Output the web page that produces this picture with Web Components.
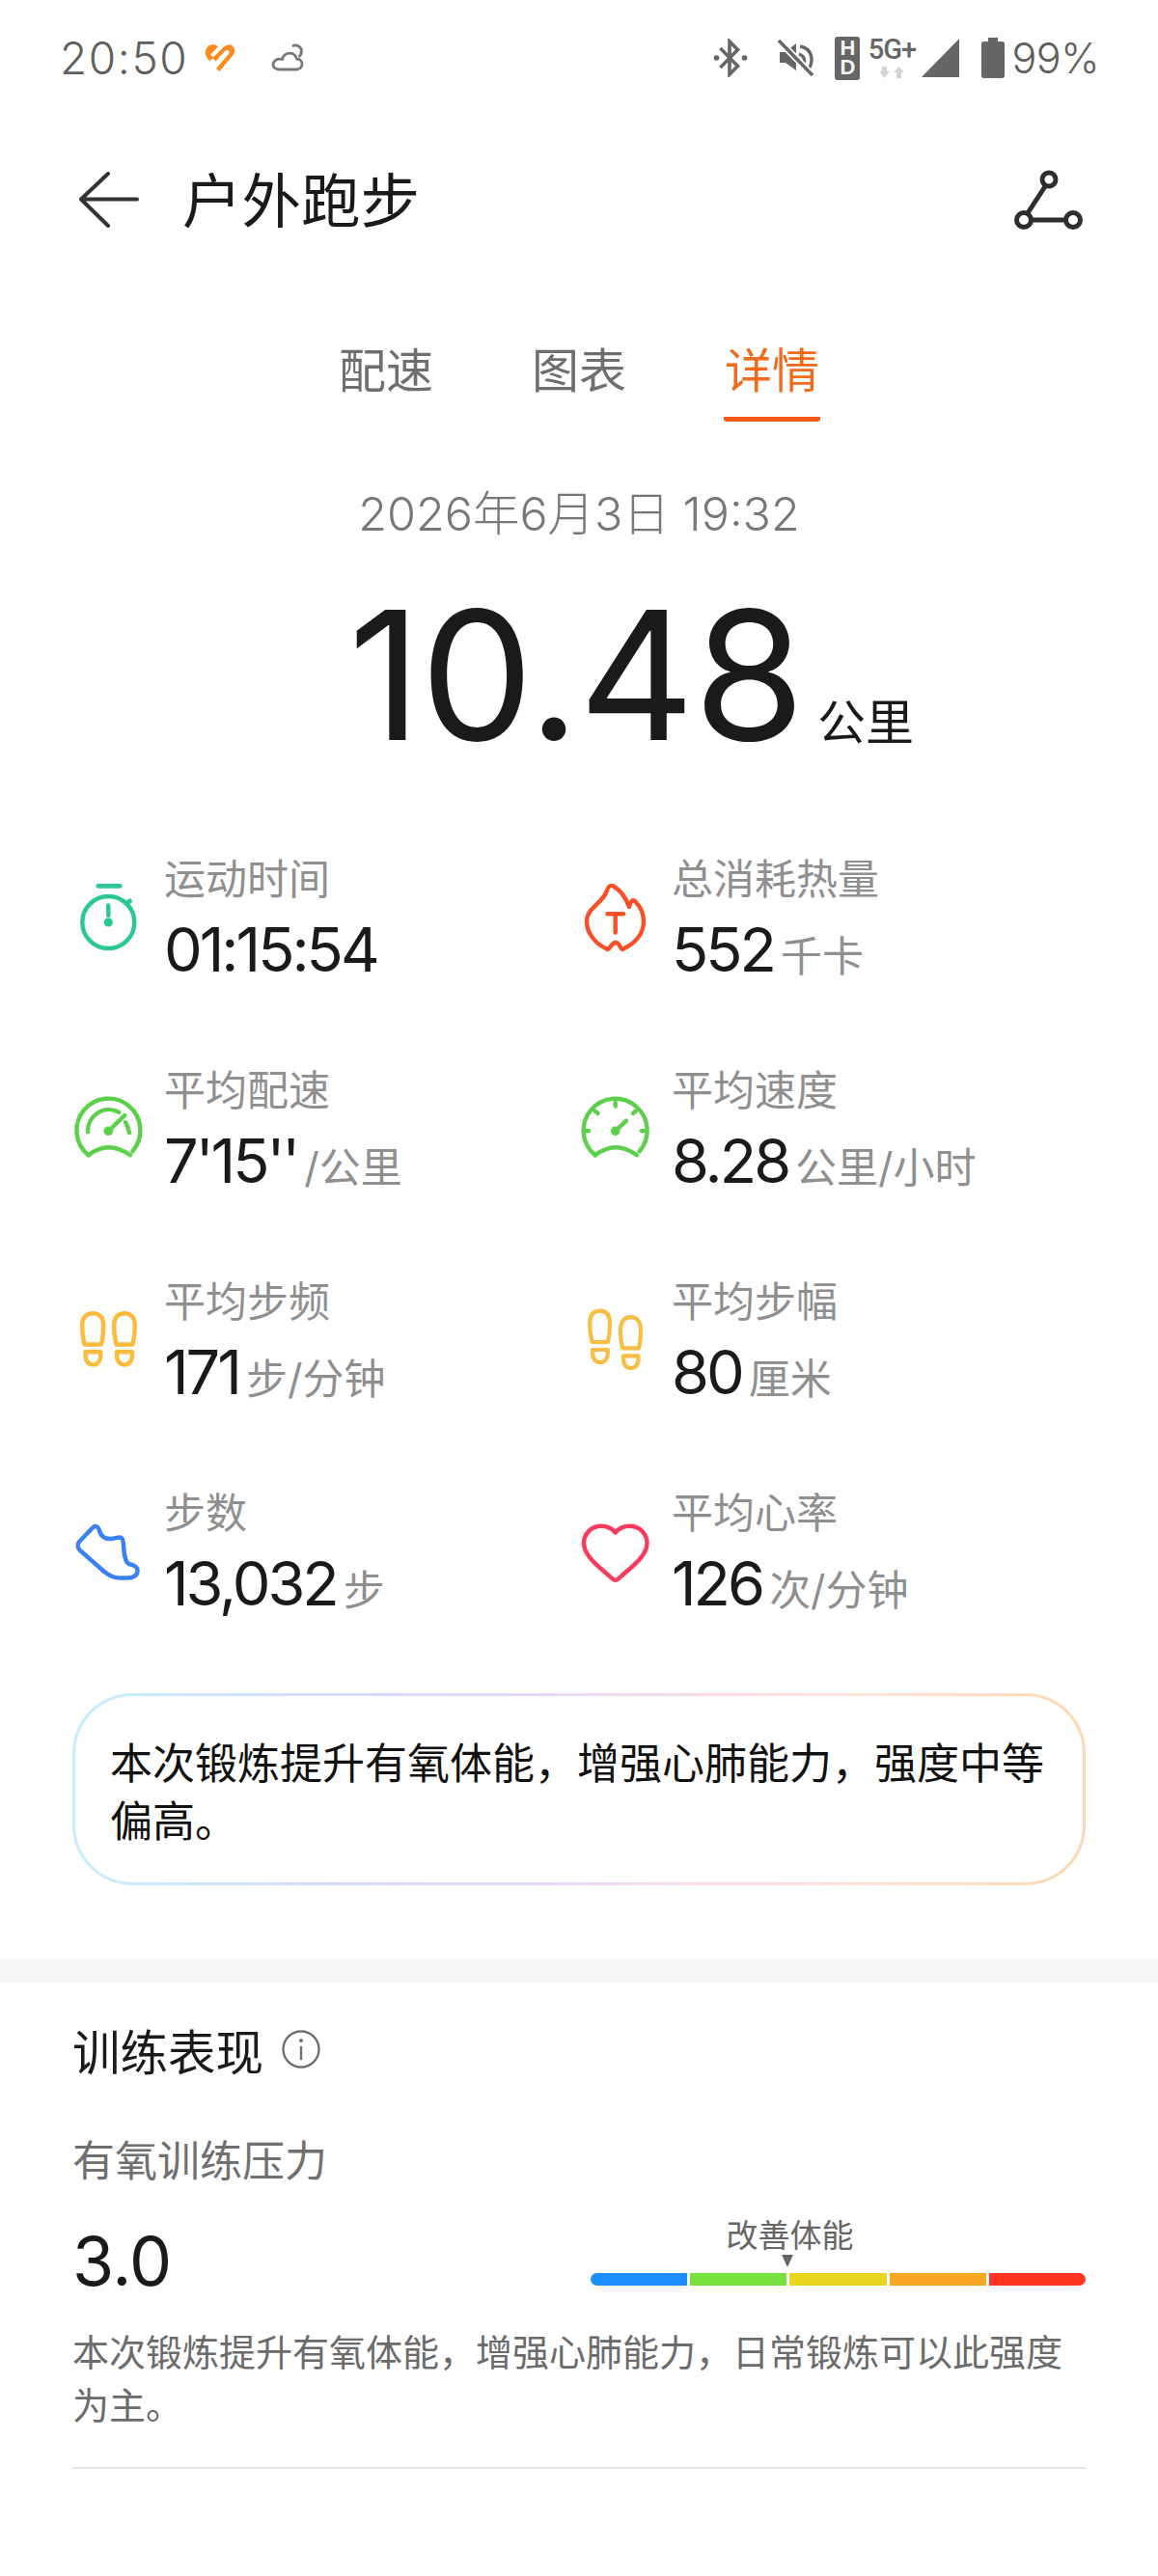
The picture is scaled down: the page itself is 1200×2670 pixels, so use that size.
<!DOCTYPE html>
<html lang="zh-CN"><head><meta charset="utf-8"><title>户外跑步</title>
<style>
html,body{margin:0;padding:0;background:#fff}
body{width:1200px;height:2670px;overflow:hidden;font-family:Inter,"Noto Sans CJK SC",sans-serif;color:#1a1a1a}
svg{display:block}
</style></head><body>
<workout-page>
  <status-bar></status-bar>
  <app-header title="户外跑步"></app-header>
  <tab-bar></tab-bar>
  <workout-summary date="2026年6月3日 19:32" distance="10.48" unit="公里"></workout-summary>
  <stat-grid>
    <stat-item label="运动时间" value="01:15:54" unit=""><svg slot="icon" width="80" height="80" viewBox="0 0 80 80" fill="none" stroke="#2bc896" stroke-width="4.4" stroke-linecap="round"><circle cx="40.3" cy="40" r="27"/><path d="M30 2.3H52" stroke-width="5"/><path d="M59.5 20.5l3-2.5" stroke-width="5"/><path d="M40.3 22.5V33"/><circle cx="40.3" cy="40" r="4.6" fill="#2bc896" stroke="none"/></svg></stat-item>
    <stat-item label="总消耗热量" value="552" unit="千卡"><svg slot="icon" width="80" height="80" viewBox="0 0 80 80" fill="none" stroke="#fa4e27" stroke-width="4.4" stroke-linecap="round" stroke-linejoin="round"><path d="M31 7C32 3 35 1 37 2C44 6 50 13 54 24C55 19 57 16 60 18C66 24 69 32 69 39C69 52 60 62 47 68C44 66 44 61 40 61C36 61 35 66 32 68C20 63 10 52 10 39C10 25 27 20 31 7Z"/><path d="M31.5 31.3H48M39.7 31.3V50.5"/></svg></stat-item>
    <stat-item label="平均配速" value="7'15''" unit="/公里"><svg slot="icon" width="80" height="80" viewBox="0 0 80 80" fill="none" stroke="#5cd04a" stroke-width="4.4" stroke-linecap="round"><path d="M19.7 62.3A33 33 0 1 1 65.3 58.3"/><path d="M19.7 62.3Q40 46 63 62.3"/><path d="M19 38.3A22 22 0 0 1 51.3 17.7"/><path d="M58 28.3Q61 33 62 39"/><path d="M40.3 37.3L57.3 21"/><circle cx="40.3" cy="37.3" r="4.8" fill="#5cd04a" stroke="none"/></svg></stat-item>
    <stat-item label="平均速度" value="8.28" unit="公里/小时"><svg slot="icon" width="80" height="80" viewBox="0 0 80 80" fill="none" stroke="#5cd04a" stroke-width="4.4" stroke-linecap="round"><path d="M18.7 62.3A33 33 0 1 1 64.7 58.3"/><path d="M18.7 62.3Q40 46 62 62.3"/><path d="M39.7 8V11.5M18.5 16.5L21.5 19M61 16.5L58 19M7.5 37.3H12M67 37.3H72"/><path d="M39.7 37.3L51 26.7"/><circle cx="39.7" cy="37.3" r="4.8" fill="#5cd04a" stroke="none"/></svg></stat-item>
    <stat-item label="平均步频" value="171" unit="步/分钟"><svg slot="icon" width="80" height="80" viewBox="0 0 80 80" fill="none" stroke="#fbbc3c" stroke-width="4.4" stroke-linejoin="round"><path d="M15.5 39.5C14 33 13 26 13.2 19C13.5 11 18 7.2 24.2 7.2C30.5 7.2 35 11 35.3 19C35.5 26 34.5 33 33 39.5Z"/><path d="M16.5 47.3H32.3V50C32.3 57 29 60.6 24.4 60.6C19.8 60.6 16.5 57 16.5 50Z"/><path d="M48.5 39.5C47 33 46 26 46.2 19C46.5 11 51 7.2 57 7.2C63 7.2 67.5 11 67.8 19C68 26 67 33 65.5 39.5Z"/><path d="M49 47.3H65V50C65 57 61.7 60.6 57 60.6C52.3 60.6 49 57 49 50Z"/></svg></stat-item>
    <stat-item label="平均步幅" value="80" unit="厘米"><svg slot="icon" width="80" height="80" viewBox="0 0 80 80" fill="none" stroke="#f8bd42" stroke-width="4.2" stroke-linejoin="round"><path d="M15.5 37C14 31 13 24 13.2 17C13.5 8 18 4.7 23.7 4.7C29.5 4.7 33.8 8 34 17C34.2 24 33.3 31 32 37Z"/><path d="M16 45H31.8V47.5C31.8 54.5 28.5 58 23.9 58C19.3 58 16 54.5 16 47.5Z"/><path d="M47 43.3C45.5 37 44.8 30 45 23.5C45.3 15 49.7 11.2 55.5 11.2C61.3 11.2 65.7 15 66 23.5C66.2 30 65.5 37 64 43.3Z"/><path d="M48 51.3H63.5V53.5C63.5 60.5 60.3 64 55.8 64C51.2 64 48 60.5 48 53.5Z"/></svg></stat-item>
    <stat-item label="步数" value="13,032" unit="步"><svg slot="icon" width="80" height="80" viewBox="0 0 80 80" fill="none" stroke="#3a80f6" stroke-width="4.4" stroke-linejoin="round"><path d="M10.5 24.5L24 10.5C26.5 8 29.5 9 30.5 12C32 18.5 36 22 42 22C46 22 49 20.5 52 20.5C54.5 20.5 55.5 22.5 55.8 26C56.5 34 56.5 46 62 48.2C65 49.2 70 49.5 70.5 54.5C70.8 60 66 62.5 60 62.5H52C45 62.5 41 60 36 56L11 34C8 31.5 8 27 10.5 24.5Z"/></svg></stat-item>
    <stat-item label="平均心率" value="126" unit="次/分钟"><svg slot="icon" width="80" height="80" viewBox="0 0 80 80" fill="none" stroke="#fa3a5c" stroke-width="4.4" stroke-linejoin="round"><path d="M39.7 15.5C35.5 10.5 30 8.8 25 8.8C14.5 8.8 7 17 7 26.5C7 36 14 43.5 22 50.5L37 63.7C38.5 65 41 65 42.4 63.7L57.5 50.5C65.5 43.5 72.5 36 72.5 26.5C72.5 17 65 8.8 54.5 8.8C49.5 8.8 44 10.5 39.7 15.5Z"/></svg></stat-item>
  </stat-grid>
  <insight-card>本次锻炼提升有氧体能，增强心肺能力，强度中等偏高。</insight-card>
  <section-gap></section-gap>
  <training-panel></training-panel>
</workout-page>
<script>
function def(name, html){
  customElements.define(name, class extends HTMLElement{
    constructor(){super();this.attachShadow({mode:'open'});}
    connectedCallback(){
      const a=n=>this.getAttribute(n)||'';
      this.shadowRoot.innerHTML=typeof html==='function'?html(a,this):html;
    }
  });
}
def('workout-page','<style>:host{display:flex;flex-direction:column;width:1200px}</style><slot></slot>');
def('status-bar',`<style>
:host{display:flex;height:120px;box-sizing:border-box;padding:0 61px 0 62px;align-items:center;justify-content:space-between;color:#666}
.l,.r{display:flex;align-items:center}
.t{font-size:46px;letter-spacing:1.6px;font-weight:300;line-height:50px;color:#5f5f5f}
.hd{width:26px;height:45px;background:#666;border-radius:3px;color:#f4f4f4;font:700 22px/20px "Liberation Sans",sans-serif;display:flex;flex-direction:column;align-items:center;justify-content:center}
.hd span{display:block;height:20px}
.net{display:flex;flex-direction:column;align-items:center;width:50px;margin-left:8px}
.g{font:500 29px/24px Roboto,sans-serif;letter-spacing:-1px;color:#666}
.p{font-size:43px;font-weight:300;line-height:50px;letter-spacing:-.5px;color:#5f5f5f;margin-left:7px}
</style>
<div class="l"><span class="t">20:50</span>
<svg style="margin-left:17px" width="32" height="30" viewBox="0 0 32 30"><path fill="#ff8a1a" d="M9 1C11 1 12.5 2 14 3.500L6 11.500L9 14.500L17 6.500C20 3 24 .5 27 1.500C31 3 32.500 8 30 11.500L15.500 29L12 26L25 11C26 9.500 26 7.500 24.500 7C23 6.500 21.500 7.500 20 9L11.500 18.500L8.500 15.500L5 18.500L1.500 12.500C-1 8 3 1 9 1Z"/></svg>
<svg style="margin-left:37px" width="34" height="30" viewBox="0 0 34 30" fill="none" stroke="#777" stroke-width="2.800"><path d="M9 27H26C29.500 27 32 25 32 21.500C32 18 29.500 16 26.500 16C25 11 21 9.500 17 10.500C13.500 11.500 12 14 11.500 16.500C6 15 2 18.500 2 22C2 25 5 27 9 27Z"/><path d="M22 3C26 .5 31.500 3 31.500 8C31.500 10.500 30.500 12.500 28.500 14"/></svg></div>
<div class="r">
<svg width="36" height="40" viewBox="0 0 36 40" fill="none" stroke="#666" stroke-width="3.600"><path d="M7.500 10L25.500 28.500L17 37V3L25.500 11.500L7.500 30"/><circle cx="3.500" cy="20" r="2.800" fill="#666" stroke="none"/><circle cx="32.500" cy="20" r="2.800" fill="#666" stroke="none"/></svg>
<svg style="margin-left:31px" width="38" height="40" viewBox="0 0 38 40" fill="none" stroke="#666" stroke-width="3.400"><path d="M2 14H8L19 5V33L8 25H2Z" fill="#666" stroke="none"/><path d="M23 8C35 10 38 22 32 32"/><path d="M22 16C28 18 28 23 27 26"/><path d="M1 2L36 38" stroke="#fff" stroke-width="7"/><path d="M1 2L36 38"/></svg>
<div class="hd" style="margin-left:21px"><span>H</span><span>D</span></div>
<div class="net"><span class="g">5G+</span><svg style="margin-top:6px" width="26" height="13" viewBox="0 0 26 13" fill="#d4d4d4"><path d="M3 0H8V5H11L5.500 12L0 5H3Z"/><path d="M18 12H23V6H26L20.500 0L15 6H18Z"/></svg></div>
<svg style="margin-left:6px" width="39" height="40" viewBox="0 0 39 40" fill="#666"><path d="M0 40L39 0V40Z"/></svg>
<svg style="margin-left:23px" width="24" height="42" viewBox="0 0 24 42" fill="#666"><path d="M7 0H17V4H21.500C23 4 24 5 24 6.500V39.500C24 41 23 42 21.500 42H2.500C1 42 0 41 0 39.500V6.500C0 5 1 4 2.500 4H7Z"/></svg>
<span class="p">99%</span></div>`);
def('app-header',a=>`<style>
:host{display:flex;height:176px;align-items:center;box-sizing:border-box;padding:0 78px 0 82px}
.h{font-size:61.500px;line-height:80px;margin:2px 0 0 45px;flex:1;color:#1a1a1a}
.up{margin-top:-3px}
</style>
<svg class="up" width="62" height="58" viewBox="0 0 62 58" fill="none" stroke="#333" stroke-width="4" stroke-linecap="round" stroke-linejoin="round"><path d="M30 2L2 28.500L30 56M2 28.500H60" /></svg>
<div class="h">${a('title')}</div>
<svg class="up" width="71" height="62" viewBox="0 0 71 62" fill="none" stroke="#2e2e2e" stroke-width="5"><circle cx="36" cy="10" r="7"/><circle cx="10" cy="52" r="7.500"/><circle cx="61" cy="52" r="7.500"/><path d="M32.500 16.500L13.500 45.500M17.500 52H53.500"/></svg>`);
def('tab-bar',`<style>
:host{display:flex;height:144px;justify-content:center;gap:100px;box-sizing:border-box;font-size:49px;color:#6f6f6f;align-items:flex-start;padding-top:60px}
span{display:block;line-height:58px;width:100px;text-align:center;height:81px;box-sizing:border-box}
.a{color:#f26a1b;border-bottom:5px solid #f2591a;border-radius:0 0 3px 3px}
</style><span>配速</span><span>图表</span><span class="a">详情</span>`);
def('workout-summary',a=>`<style>
:host{display:flex;flex-direction:column;align-items:center;box-sizing:border-box;height:406px}
.d{font-size:48.500px;line-height:60px;margin-top:63px;color:#777;font-weight:300}
.n{display:flex;align-items:baseline;margin-top:37px;height:200px;margin-left:108px}
.v{font-size:186px;line-height:200px;letter-spacing:-1px;font-weight:400;color:#1a1a1a}
.u{font-size:50px;margin-left:14px;color:#1a1a1a}
</style><div class="d">${a('date')}</div><div class="n"><span class="v">${a('distance')}</span><span class="u">${a('unit')}</span></div>`);
def('stat-grid','<style>:host{display:grid;grid-template-columns:526px 526px;grid-auto-rows:219px;padding-left:72px}</style><slot></slot>');
def('stat-item',a=>`<style>
:host{display:flex;align-items:center;gap:18px}
.l{font-size:43px;line-height:56px;color:#8f8f8f}
.r{display:flex;align-items:baseline;height:90px;line-height:90px}
.v{font-size:63px;font-weight:400;letter-spacing:-3px;color:#1a1a1a}
.u{font-size:43px;color:#8f8f8f;margin-left:7px}
::slotted(svg){flex:none}
</style><slot name="icon"></slot><div><div class="l">${a('label')}</div><div class="r"><span class="v">${a('value')}</span>${a('unit')?`<span class="u">${a('unit')}</span>`:''}</div></div>`);
def('insight-card',`<style>
:host{display:flex;align-items:center;box-sizing:border-box;width:1050px;height:199px;margin:33px 0 0 75px;padding:6px 36px 0;border:3px solid transparent;border-radius:62px;
background:linear-gradient(#fff,#fff) padding-box,linear-gradient(90deg,#c5eefe,#d3dcfc 25%,#e6d8fa 45%,#f8dce9 62%,#fde3d6 78%,#ffd7ae) border-box;
font-size:44px;line-height:60px;color:#111}
</style><div><slot></slot></div>`);
def('section-gap','<style>:host{display:block;height:25px;margin-top:76px;background:#f6f6f6}</style>');
def('training-panel',`<style>
:host{display:block;padding:0 75px}
.t{display:flex;align-items:center;height:72px;margin-top:33px;font-size:49.500px;color:#1a1a1a}
.t svg{margin-left:19px}
.s{font-size:44px;line-height:60px;margin-top:50px;color:#707070}
.m{display:flex;justify-content:space-between;align-items:flex-start;height:107px;margin-top:12px}
.n{font-size:70px;line-height:90px;margin-top:17px;color:#1a1a1a;letter-spacing:-.5px}
.g{width:513px;height:90px;display:flex;flex-direction:column;justify-content:flex-end;padding-bottom:3px;box-sizing:border-box}
.lab{font-size:33px;line-height:40px;color:#666;text-align:center;width:133px;margin-left:140px}
.tri{width:0;height:0;border-left:6.500px solid transparent;border-right:6.500px solid transparent;border-top:13px solid #666;margin:0 0 6px 198px}
.b{display:grid;grid-template-columns:repeat(5,1fr);gap:3px;height:13px;border-radius:7px;overflow:hidden}
.d{font-size:38px;line-height:55px;margin-top:22px;color:#6b6b6b}
.hr{height:2px;background:#e4e4e4;margin-top:36px}
</style>
<div class="t">训练表现<svg width="40" height="40" viewBox="0 0 40 40" fill="none" stroke="#707070" stroke-width="2.400"><circle cx="20" cy="20" r="18.500"/><path d="M20 17V31"/><circle cx="20" cy="11" r="2" fill="#707070" stroke="none"/></svg></div>
<div class="s">有氧训练压力</div>
<div class="m"><span class="n">3.0</span><div class="g"><div class="lab">改善体能</div><div class="tri"></div><div class="b"><i style="background:#1e8fff"></i><i style="background:#76e23e"></i><i style="background:#e8d61e"></i><i style="background:#f7a623"></i><i style="background:#ff3522"></i></div></div></div>
<div class="d">本次锻炼提升有氧体能，增强心肺能力，日常锻炼可以此强度为主。</div>
<div class="hr"></div>`);
</script>
</body></html>
